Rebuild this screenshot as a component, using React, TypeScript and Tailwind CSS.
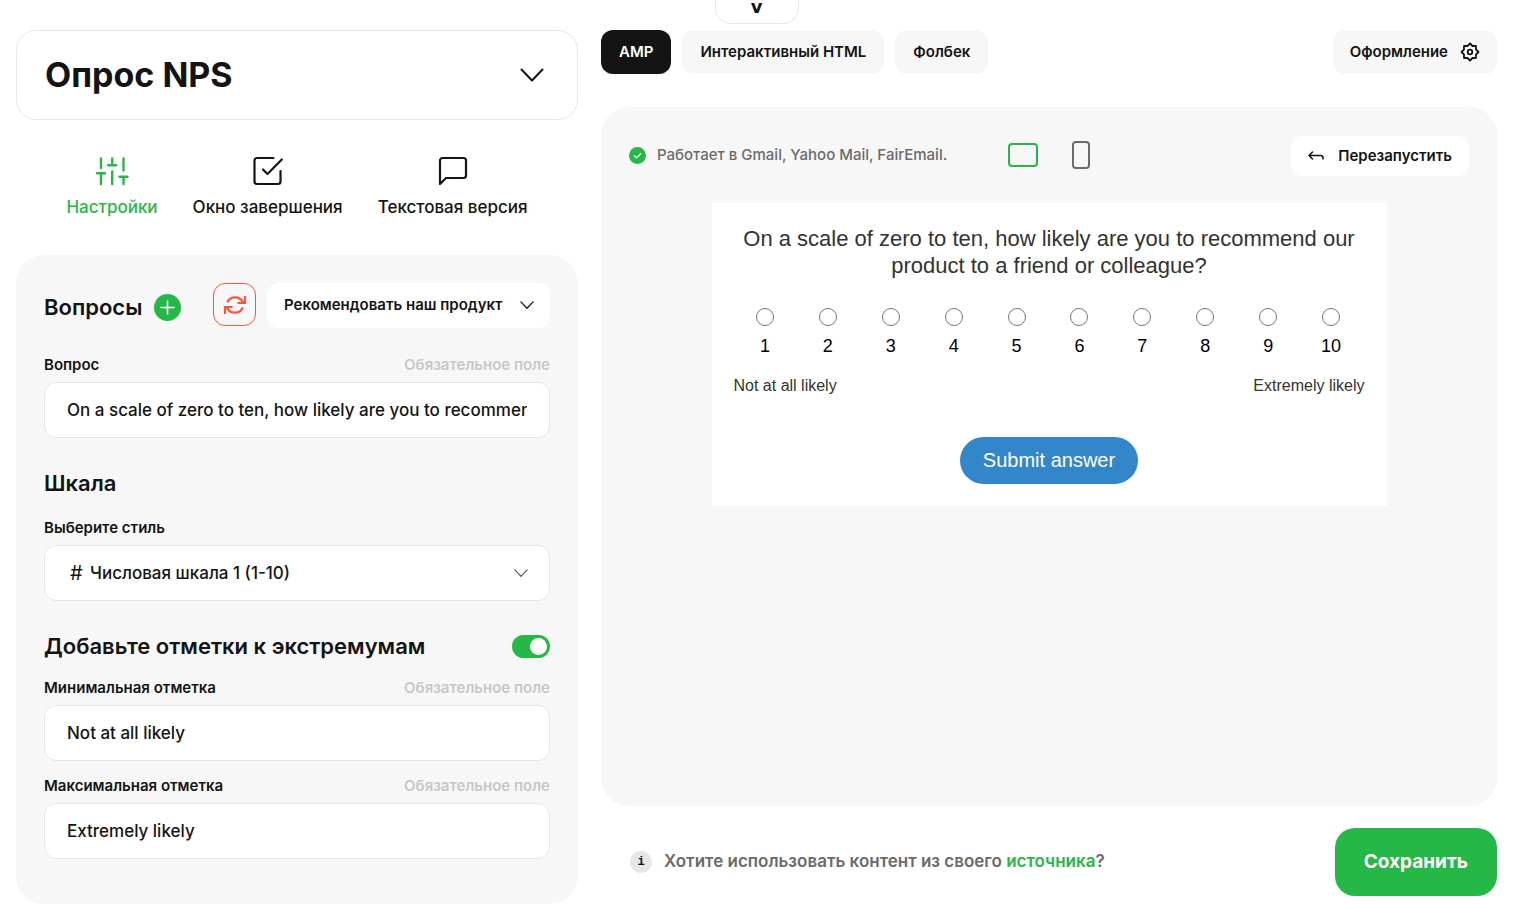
import { useState } from "react";
import type { ReactNode } from "react";

const scale = [1, 2, 3, 4, 5, 6, 7, 8, 9, 10];

const Chevron = ({ className }: { className?: string }) => (
  <svg viewBox="0 0 24 14" fill="none" stroke="currentColor" strokeLinecap="round" strokeLinejoin="round" className={className} aria-hidden="true">
    <path d="M1.5 1.5 12 12.5 22.5 1.5" />
  </svg>
);

const SlidersIcon = () => (
  <svg width="34" height="30" viewBox="0 0 34 30" fill="none" stroke="currentColor" strokeWidth="2.4" strokeLinecap="round" aria-hidden="true">
    <path d="M6 2.500V12M6 17.300V28M2 17.300h8M17.200 2.500v6.800M17.200 15.500V28M13.200 9.300h8M28.500 2.500v12M28.500 20.700V28M24.500 20.700h8" />
  </svg>
);

const CheckIcon = () => (
  <svg width="30" height="30" viewBox="0 0 30 30" fill="none" stroke="currentColor" strokeWidth="2.2" strokeLinecap="round" strokeLinejoin="round" aria-hidden="true">
    <path d="M20.500 2H4a2.500 2.500 0 0 0-2.500 2.500v21A2.500 2.500 0 0 0 4 28h21a2.500 2.500 0 0 0 2.500-2.500V15" />
    <path d="m10 13.500 4.500 4.500L28.800 3.500" />
  </svg>
);

const MessageIcon = () => (
  <svg width="30" height="30" viewBox="0 0 30 30" fill="none" stroke="currentColor" strokeWidth="2.2" strokeLinecap="round" strokeLinejoin="round" aria-hidden="true">
    <path d="M2 28V4.500A2.500 2.500 0 0 1 4.500 2h21A2.500 2.500 0 0 1 28 4.500v15a2.500 2.500 0 0 1-2.500 2.500H8z" />
  </svg>
);

const RefreshIcon = () => (
  <svg width="24" height="24" viewBox="0 0 24 24" fill="none" stroke="currentColor" strokeWidth="2.2" aria-hidden="true">
    <path d="M4.200 9.500a8.600 8.600 0 0 1 15.800 0M22 3v7h-7.500M18.500 7.500 21 10" />
    <path d="M19.800 14.500a8.600 8.600 0 0 1-15.800 0M2 21v-7h7.500M5.500 16.500 3 14" />
  </svg>
);

const GearIcon = () => (
  <svg width="20" height="20" viewBox="0 0 20 20" fill="none" stroke="currentColor" strokeWidth="1.800" strokeLinejoin="round" aria-hidden="true">
    <path d="M10 1.500 12.500 4H16v3.500l2.500 2.500-2.500 2.500V16h-3.500L10 18.500 7.500 16H4v-3.500L1.500 10 4 7.500V4h3.500z" />
    <circle cx="10" cy="10" r="2.300" />
  </svg>
);

const Tab = ({ icon, label, active }: { icon: ReactNode; label: string; active?: boolean }) => (
  <button
    type="button"
    className={`flex flex-col items-center gap-[7px] text-[17px] leading-7 font-medium ${active ? "text-[#26b846]" : "text-[#141414]"}`}
  >
    {icon}
    {label}
  </button>
);

const Field = ({ id, label, value }: { id: string; label: string; value: string }) => (
  <div>
    <div className="mb-[7px] flex justify-between pt-px text-[15px] leading-5 font-semibold">
      <label htmlFor={id}>{label}</label>
      <span className="text-[#c8c8c8]">Обязательное поле</span>
    </div>
    <input
      id={id}
      defaultValue={value}
      className="h-14 w-full rounded-xl border border-[#e7e7e7] bg-white px-[22px] text-[17px] font-medium outline-none"
    />
  </div>
);

const Settings = () => {
  const [marks, setMarks] = useState(true);

  return (
    <section className="rounded-[28px] bg-[#f7f7f7] px-7 pt-7 pb-[45px]">
      <div className="mb-[26px] flex h-[45px] items-start">
        <div className="mt-2 flex items-center gap-3">
          <h2 className="text-[22px] leading-8 font-semibold">Вопросы</h2>
          <button type="button" aria-label="Добавить вопрос" className="flex size-[27px] items-center justify-center rounded-full bg-[#26b846] text-white">
            <svg width="15" height="15" viewBox="0 0 15 15" stroke="currentColor" strokeWidth="1.600" strokeLinecap="round" aria-hidden="true">
              <path d="M7.500 1v13M1 7.500h13" />
            </svg>
          </button>
        </div>
        <button type="button" aria-label="Обновить" className="ml-auto flex size-[43px] items-center justify-center rounded-xl border border-[#f4593b] text-[#f4593b]">
          <RefreshIcon />
        </button>
        <div className="ml-[11px] grid items-center">
          <select aria-label="Список вопросов" className="col-start-1 row-start-1 h-[45px] w-[283px] appearance-none rounded-xl bg-white px-[17px] pb-px text-[15px] font-semibold outline-none">
            <option>Рекомендовать наш продукт</option>
          </select>
          <Chevron className="pointer-events-none col-start-1 row-start-1 mr-4 w-[14px] justify-self-end stroke-[2.2]" />
        </div>
      </div>

      <Field id="question" label="Вопрос" value="On a scale of zero to ten, how likely are you to recommend our product to a friend or colleague?" />

      <h2 className="mt-[29px] mb-[19px] text-[22px] leading-8 font-semibold">Шкала</h2>
      <label htmlFor="style" className="mb-[7px] block text-[15px] leading-5 font-semibold">Выберите стиль</label>
      <div className="grid items-center text-[17px] font-medium">
        <select id="style" className="col-start-1 row-start-1 h-14 w-full appearance-none rounded-xl border border-[#e7e7e7] bg-white pt-0.5 pr-10 pl-[45px] outline-none">
          <option>Числовая шкала 1 (1-10)</option>
        </select>
        <span className="pointer-events-none col-start-1 row-start-1 ml-[26px] justify-self-start text-xl font-normal">#</span>
        <Chevron className="pointer-events-none col-start-1 row-start-1 mr-[22px] w-[14px] justify-self-end stroke-[2] text-[#555]" />
      </div>

      <label className="mt-[29px] mb-[15px] flex h-8 items-center justify-between">
        <span className="text-[22px] leading-8 font-semibold">Добавьте отметки к экстремумам</span>
        <input type="checkbox" role="switch" checked={marks} onChange={() => setMarks(!marks)} className="peer sr-only" />
        <span className="flex h-[23px] w-[38px] items-center rounded-full bg-[#c8c8c8] px-[3px] peer-checked:justify-end peer-checked:bg-[#26b846]">
          <span className="size-[17px] rounded-full bg-white" />
        </span>
      </label>

      <div className="flex flex-col gap-[14px]">
        <Field id="min-mark" label="Минимальная отметка" value="Not at all likely" />
        <Field id="max-mark" label="Максимальная отметка" value="Extremely likely" />
      </div>
    </section>
  );
};

const Preview = () => (
  <form
    onSubmit={(e) => e.preventDefault()}
    className="mx-auto mt-[27px] flex w-full max-w-[675px] flex-col items-center bg-white px-[22px] pt-[22px] pb-[22px] font-['Liberation_Sans',Arial,sans-serif] text-[#333]"
  >
    <p className="text-center text-[22px] leading-[27px]">
      On a scale of zero to ten, how likely are you to recommend our product to a friend or colleague?
    </p>
    <div className="mt-[29px] grid w-full grid-cols-10 pr-0.5">
      {scale.map((n) => (
        <label key={n} className="flex flex-col items-center gap-2 text-lg leading-6 text-black">
          <input type="radio" name="score" value={n} className="size-[18px] appearance-none rounded-full border border-[#767676] bg-white checked:border-[5px] checked:border-[#3386ca]" />
          {n}
        </label>
      ))}
    </div>
    <div className="mt-4 flex w-full justify-between text-base leading-6">
      <span>Not at all likely</span>
      <span>Extremely likely</span>
    </div>
    <button type="submit" className="mt-[39px] h-[47px] rounded-full bg-[#3386ca] px-[23px] pb-0.5 text-xl text-white">
      Submit answer
    </button>
  </form>
);

export default function App() {
  return (
    <div className="min-h-screen bg-white pr-5 pb-[10px] pl-4 font-[Inter,'Noto_Sans',sans-serif] text-[#141414]">
      <header className="flex h-[30px] items-start justify-center">
        <button type="button" aria-label="Развернуть меню" className="flex h-6 w-[84px] items-start justify-center rounded-b-2xl border border-t-0 border-[#e7e7e7] font-['DejaVu_Sans',sans-serif] text-lg leading-[14px] font-bold">
          v
        </button>
      </header>

      <div className="grid grid-cols-[562fr_896fr] gap-[23px]">
        <aside>
          <button type="button" className="flex h-[90px] w-full items-center justify-between rounded-[20px] border border-[#e7e7e7] pr-[33px] pl-7 text-left">
            <h1 className="text-[34px] leading-10 font-bold">Опрос NPS</h1>
            <Chevron className="w-6 stroke-2" />
          </button>

          <nav className="flex h-[135px] items-start justify-center gap-[35px] pt-9">
            <Tab icon={<SlidersIcon />} label="Настройки" active />
            <Tab icon={<CheckIcon />} label="Окно завершения" />
            <Tab icon={<MessageIcon />} label="Текстовая версия" />
          </nav>

          <Settings />
        </aside>

        <main className="flex flex-col pb-2">
          <div className="flex gap-[11px] text-[15px] font-semibold">
            <button type="button" className="h-11 rounded-xl bg-[#141414] px-[18px] text-white">AMP</button>
            <button type="button" className="h-11 rounded-xl bg-[#f7f7f7] px-[18px]">Интерактивный HTML</button>
            <button type="button" className="h-11 rounded-xl bg-[#f7f7f7] px-[18px]">Фолбек</button>
            <button type="button" className="ml-auto flex h-11 items-center gap-3 rounded-xl bg-[#f7f7f7] px-[17px]">
              Оформление
              <GearIcon />
            </button>
          </div>

          <section className="mt-[33px] grow rounded-[28px] bg-[#f7f7f7] px-7 pt-[29px] pb-7">
            <div className="grid h-10 grid-cols-[1fr_auto_1fr] items-center">
              <p className="flex items-center gap-[11px] pb-0.5 text-[15px] font-medium whitespace-nowrap text-[#6b6b6b]">
                <svg width="17" height="17" viewBox="0 0 17 17" fill="none" aria-hidden="true">
                  <circle cx="8.500" cy="8.500" r="8.500" fill="#26b846" />
                  <path d="m5.300 8.700 2.200 2.200 4.200-4.200" stroke="#fff" strokeWidth="1.300" strokeLinecap="round" strokeLinejoin="round" />
                </svg>
                Работает в Gmail, Yahoo Mail, FairEmail.
              </p>
              <div className="flex items-center gap-[34px] pb-0.5">
                <button type="button" aria-label="Планшет" className="h-6 w-[30px] rounded-[4px] border-2 border-[#26b846]" />
                <button type="button" aria-label="Телефон" className="h-7 w-[18px] rounded-[4px] border-2 border-[#6b6b6b]" />
              </div>
              <button type="button" className="flex h-10 items-center gap-[14px] justify-self-end rounded-xl bg-white px-[17px] text-[15px] font-semibold">
                <svg width="16" height="10" viewBox="0 0 16 10" fill="none" stroke="currentColor" strokeWidth="1.500" strokeLinecap="round" strokeLinejoin="round" aria-hidden="true">
                  <path d="M4.500 1 1 4.500 4.500 8M1 4.500h11.500a2.500 2.500 0 0 1 2.500 2.500v1" />
                </svg>
                Перезапустить
              </button>
            </div>
            <Preview />
          </section>

          <footer className="mt-[22px] flex items-center pl-[29px]">
            <span className="mr-3 flex size-[22px] items-center justify-center rounded-full bg-[#e7e7e7] font-['Liberation_Mono',monospace] text-xs font-bold">i</span>
            <p className="text-[17px] font-semibold text-[#6b6b6b]">
              Хотите использовать контент из своего <a href="#source" className="text-[#26b846]">источника</a>?
            </p>
            <button type="button" className="ml-auto h-[68px] rounded-[20px] bg-[#26b846] px-[29px] text-[19px] font-bold text-white">
              Сохранить
            </button>
          </footer>
        </main>
      </div>
    </div>
  );
}
